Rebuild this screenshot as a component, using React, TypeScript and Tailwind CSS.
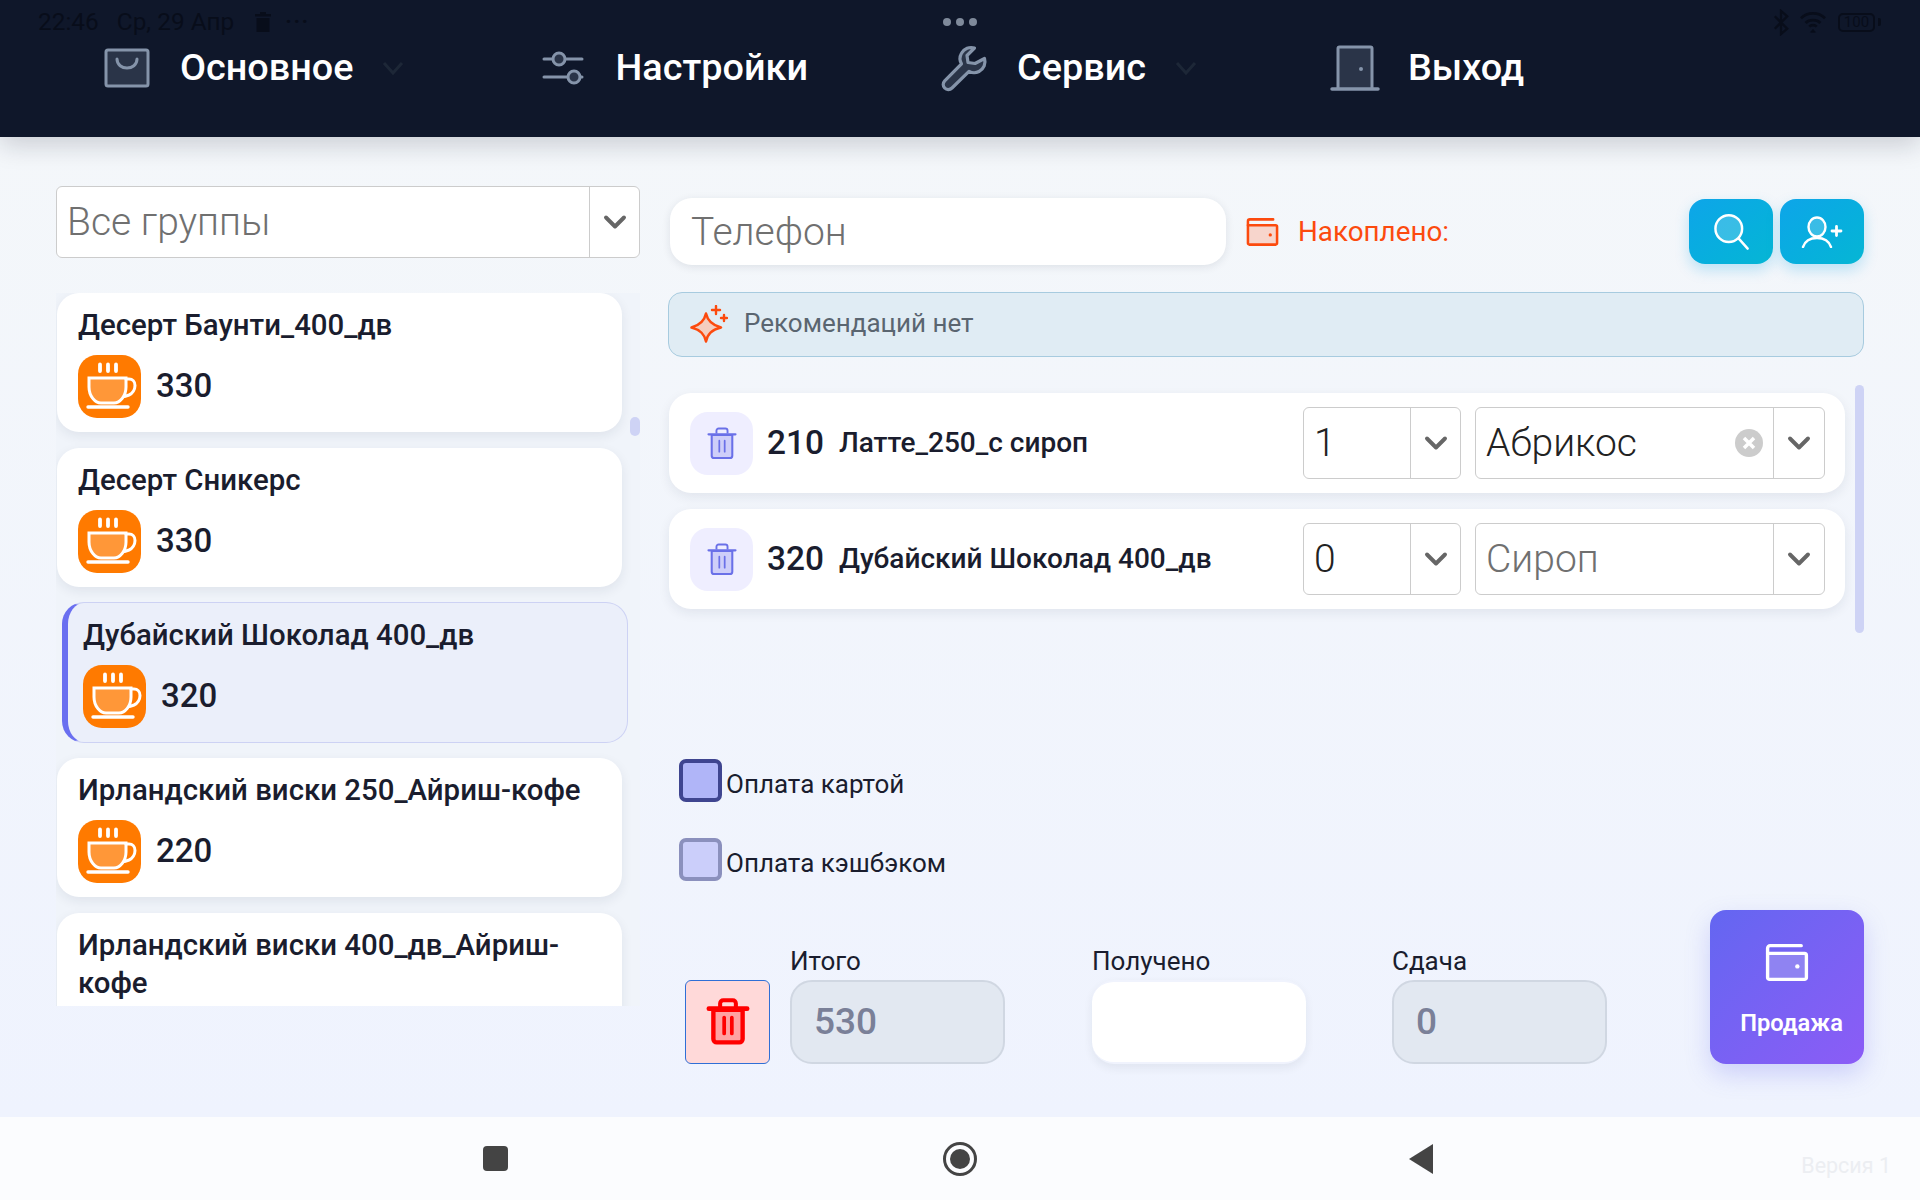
import { ChevronDown } from "lucide-react";

const PRODUCTS = [
  { name: "Десерт Баунти_400_дв", price: "330" },
  { name: "Десерт Сникерс", price: "330" },
  { name: "Дубайский Шоколад 400_дв", price: "320", active: true },
  { name: "Ирландский виски 250_Айриш-кофе", price: "220" },
  { name: "Ирландский виски 400_дв_Айриш-кофе", price: "" },
];

const CupIcon = () => (
  <div className="w-[63px] h-[63px] shrink-0 rounded-[19px] bg-[#ff7a00] flex items-center justify-center">
    <svg viewBox="0 0 63 63" className="w-[63px] h-[63px]" fill="none">
      <path d="M11 23h37v9c0 9-6 16-12 16H23c-6 0-12-7-12-16z" fill="#ffffff" fillOpacity="0.22" stroke="#fff" strokeWidth="3" />
      <path d="M48 24h3c3.500 0 6 2.500 6 6.500s-2.500 8-6 9.500l-4.500 1.500" stroke="#fff" strokeWidth="3" strokeLinecap="round" />
      <path d="M10 52h40" stroke="#fff" strokeWidth="3.400" strokeLinecap="round" />
      <path d="M22 9.500v6.500M30 9.500v6.500M38 9.500v6.500" stroke="#fff" strokeWidth="3.800" strokeLinecap="round" />
    </svg>
  </div>
);

const TrashIcon = ({ color, size, weight = 1 }: { color: string; size: number; weight?: number }) => (
  <svg viewBox="0 0 24 24" width={size} height={size} fill="none">
    <path d="M5.500 7h13v13a1.500 1.500 0 0 1-1.500 1.500H7A1.500 1.500 0 0 1 5.500 20z" fill={color} fillOpacity="0.25" stroke={color} strokeWidth={1.3 * weight} strokeLinejoin="round" />
    <path d="M3.500 6.500h17" stroke={color} strokeWidth={1.4 * weight} strokeLinecap="round" />
    <path d="M8.500 6V4.200c0-.8.6-1.400 1.400-1.400h4.200c.8 0 1.400.6 1.400 1.400V6" stroke={color} strokeWidth={1.2 * weight} />
    <path d="M10.300 10.500v7M13.700 10.500v7" stroke={color} strokeWidth={1.1 * weight} strokeLinecap="round" />
  </svg>
);

const WalletIcon = ({ color, fill }: { color: string; fill: string }) => (
  <svg viewBox="0 0 34 30" className="w-full h-full" fill="none">
    <path d="M2 8h28.500a1.500 1.500 0 0 1 1.500 1.500v17a1.500 1.500 0 0 1-1.500 1.500h-27A1.500 1.500 0 0 1 2 26.500z" fill={fill} stroke={color} strokeWidth="2.600" strokeLinejoin="round" />
    <path d="M2 8V4a2 2 0 0 1 2-2h24" stroke={color} strokeWidth="2.600" strokeLinecap="round" />
    <circle cx="25" cy="18" r="1.700" fill={color} />
  </svg>
);

const NavChevron = () => (
  <svg viewBox="0 0 22 14" className="w-[22px] h-[14px]" fill="none">
    <path d="M2 2l9 10 9-10" stroke="#1d2737" strokeWidth="3" />
  </svg>
);

const Select = ({ value, placeholder, clear, w, dividerRight }: { value: string; placeholder?: boolean; clear?: boolean; w: string; dividerRight: string }) => (
  <div className={`${w} h-[72px] shrink-0 bg-white border border-[#cccccc] rounded-[6px] flex items-center`}>
    <span className={`flex-1 pl-[10px] text-[39px] font-light leading-none ${placeholder ? "text-[#707070]" : "text-[#222222]"}`}>{value}</span>
    {clear && (
      <svg viewBox="0 0 28 28" className="w-[28px] h-[28px] mr-[10px]" fill="none">
        <circle cx="14" cy="14" r="14" fill="#cccccc" />
        <path d="M9 9l10 10M19 9L9 19" stroke="#fff" strokeWidth="3.500" />
      </svg>
    )}
    <div className={`${dividerRight} h-full border-l border-[#cccccc] flex items-center justify-center`}>
      <ChevronDown size={36} strokeWidth={2.6} color="#666666" />
    </div>
  </div>
);

const ProductCard = ({ name, price, active }: { name: string; price: string; active?: boolean }) => (
  <div
    className={
      active
        ? "h-[141px] my-[-1px] ml-[5px] w-[566px] shrink-0 rounded-[22px] bg-[#ebeffa] border border-[#cdd2f4] border-l-[6px] border-l-[#6a6ff0] pl-[15px] pr-[15px] pt-[13px]"
        : "h-[139px] w-[565px] shrink-0 rounded-[22px] bg-white shadow-[0_4px_12px_rgba(30,41,59,0.08)] pl-[21px] pr-[21px] pt-[13px]"
    }
  >
    <div className="text-[29.4px] leading-[38px] font-medium text-[#1a1d2e]">{name}</div>
    {price && (
      <div className="flex items-center gap-[15px] mt-[11px]">
        <CupIcon />
        <span className="pb-[2px] text-[33px] font-medium text-[#1a1d2e]">{price}</span>
      </div>
    )}
  </div>
);

const OrderRow = ({ price, name, qty, syrup, selected }: { price: string; name: string; qty: string; syrup: string; selected?: boolean }) => (
  <div className="ml-[1px] w-[1176px] h-[100px] bg-white rounded-[22px] shadow-[0_4px_12px_rgba(30,41,59,0.08)] flex items-center pl-[21px] pr-[20px]">
    <div className="w-[63px] h-[63px] rounded-[18px] bg-[#efeeff] flex items-center justify-center">
      <TrashIcon color="#6a70e8" size={38} />
    </div>
    <span className="ml-[14px] text-[33.4px] font-medium text-[#1a1d2e]">{price}</span>
    <span className="ml-[15px] flex-1 text-[28px] font-medium text-[#1a1d2e]">{name}</span>
    <Select value={qty} w="w-[158px]" dividerRight="w-[50px]" />
    <div className="w-[14px]" />
    <Select value={syrup} placeholder={!selected} clear={selected} w="w-[350px]" dividerRight="w-[51px]" />
  </div>
);

const Field = ({ label, value, white, w }: { label: string; value?: string; white?: boolean; w: string }) => (
  <div className={`${w} flex flex-col`}>
    <span className="text-[26px] leading-[30px] text-[#1a1d2e] mb-[4px]">{label}</span>
    <div
      className={
        white
          ? "h-[84px] border-y-2 border-[#f0f3fd] rounded-[22px] bg-white shadow-[0_4px_10px_rgba(30,41,59,0.07)]"
          : "h-[84px] rounded-[22px] bg-[#e2e8f1] border-2 border-[#d0d7e2] pl-[22px] flex items-center text-[37px] font-medium text-[#7a8098]"
      }
    >
      {value}
    </div>
  </div>
);

export default function App() {
  return (
    <div className="w-[1920px] h-[1200px] flex flex-col overflow-hidden font-['Roboto',sans-serif] bg-[#f1f5fc]">
      {/* Header */}
      <header className="relative z-10 h-[137px] shrink-0 bg-[#0f172a] shadow-[0_8px_24px_rgba(15,23,42,0.18)]">
        <div className="h-[44px] pl-[38px] pr-[39px] flex items-center justify-between text-[#080d1a]">
          <div className="flex items-center text-[24.4px] leading-none">
            <span>22:46</span>
            <span className="ml-[18px]">Ср, 29 Апр</span>
            <svg viewBox="0 0 24 24" className="w-[24px] h-[24px] ml-[17px]" fill="#080d1a">
              <path d="M9 2h6v2h5v2.500H4V4h5zM5.500 8h13v14h-13z" />
            </svg>
            <span className="ml-[10px] text-[22px] tracking-[1.5px] font-bold">···</span>
          </div>
          <div className="flex items-center">
            <svg viewBox="0 0 18 30" className="w-[16px] h-[27px]" fill="none" stroke="#080d1a" strokeWidth="2.600">
              <path d="M2 8l14 14-7 6V2l7 6L2 22" />
            </svg>
            <svg viewBox="0 0 30 26" className="w-[28px] h-[24px] ml-[10px]" fill="none" stroke="#080d1a" strokeWidth="3">
              <path d="M2 9c7-7 19-7 26 0M7 14c4-4 12-4 16 0M11 18c2-2 6-2 8 0" />
              <path d="M15 21l-2.500 3h5z" fill="#080d1a" strokeWidth="1" />
            </svg>
            <div className="w-[37px] h-[19px] ml-[11px] border-[2px] border-[#080d1a] rounded-[5px] flex items-center justify-center text-[15px] leading-none text-[#080d1a]">
              100
            </div>
            <div className="w-[3px] h-[8px] ml-[3px] rounded-r-[2px] bg-[#080d1a]" />
          </div>
        </div>

        <div className="absolute left-[943px] top-[18px] flex gap-[5px]">
          <div className="w-[8px] h-[8px] rounded-full bg-[#7f8a9b]" />
          <div className="w-[8px] h-[8px] rounded-full bg-[#7f8a9b]" />
          <div className="w-[8px] h-[8px] rounded-full bg-[#7f8a9b]" />
        </div>

        <nav className="flex items-center h-[48px] pl-[104px] text-[37.8px] font-medium text-white leading-none">
          <svg viewBox="0 0 46 40" className="w-[46px] h-[40px]" fill="none">
            <rect x="2" y="2" width="42" height="36" rx="2" fill="#2a3448" stroke="#8594aa" strokeWidth="3" />
            <path d="M13 11c0 12 20 12 20 0" stroke="#8594aa" strokeWidth="3" strokeLinecap="round" />
          </svg>
          <span className="ml-[30px]">Основное</span>
          <div className="ml-[28px]"><NavChevron /></div>

          <svg viewBox="0 0 42 36" className="w-[42px] h-[36px] ml-[138px]" fill="none" stroke="#8594aa" strokeWidth="3" strokeLinecap="round">
            <path d="M2 9h8M24 9h16M2 27h24M38 27h2" />
            <circle cx="17" cy="9" r="6" fill="#2a3448" />
            <circle cx="32" cy="27" r="6" fill="#2a3448" />
          </svg>
          <span className="ml-[32px]">Настройки</span>

          <svg viewBox="0 0 48 48" className="w-[48px] h-[48px] ml-[133px]" fill="none">
            <path
              d="M43.500 14.500c1.500 5-0.500 10.500-5.500 13-3.500 1.800-7 1.500-10-0.200L11 44c-2.200 2.200-5.500 2-7.300 0-2-1.800-2-5 0-7.200l16.800-17c-1.800-3-2-7 0-10.500C23 4.500 28.500 2.500 33.500 4L26 11.500l1 7 7 1z"
              fill="#2a3448"
              stroke="#8594aa"
              strokeWidth="3.200"
              strokeLinejoin="round"
            />
          </svg>
          <span className="ml-[28px]">Сервис</span>
          <div className="ml-[29px]"><NavChevron /></div>

          <svg viewBox="0 0 50 46" className="w-[50px] h-[46px] ml-[133px]" fill="none">
            <path d="M8 44V3.500a1.500 1.500 0 0 1 1.500-1.500h31a1.500 1.500 0 0 1 1.500 1.500V44" fill="#2a3448" stroke="#8594aa" strokeWidth="3" />
            <path d="M2 44h46" stroke="#8594aa" strokeWidth="3.500" strokeLinecap="round" />
            <circle cx="31" cy="24" r="2" fill="#8594aa" />
          </svg>
          <span className="ml-[28px]">Выход</span>
        </nav>
      </header>

      {/* Content */}
      <main className="flex-1 flex pl-[56px] pt-[49px] gap-[28px] bg-gradient-to-b from-[#f4f7fa] to-[#eff3fe]">
        <div className="w-[584px] shrink-0 flex flex-col">
          <div className="h-[72px] bg-white border border-[#cccccc] rounded-[6px] flex items-center">
            <span className="flex-1 pl-[10px] text-[39px] font-light text-[#707070] leading-none">Все группы</span>
            <div className="w-[50px] h-full border-l border-[#cccccc] flex items-center justify-center">
              <ChevronDown size={36} strokeWidth={2.6} color="#666666" />
            </div>
          </div>

          <div className="relative mt-[35px] h-[713px] overflow-hidden flex flex-col gap-[16px] pl-[1px] bg-[#f0f4fa]">
            {PRODUCTS.map((p) => (
              <ProductCard key={p.name} {...p} />
            ))}
            <div className="absolute left-[574px] top-[124px] w-[10px] h-[19px] rounded-[5px] bg-[#ced3f5]" />
          </div>
        </div>

        <div className="w-[1196px] shrink-0 flex flex-col">
          <div className="mt-[12px] h-[67px] flex items-center">
            <div className="ml-[2px] w-[556px] h-[67px] bg-white rounded-[22px] shadow-[0_2px_8px_rgba(30,41,59,0.10)] flex items-center pl-[21px] pt-[2px] text-[39px] font-light text-[#707070]">
              Телефон
            </div>
            <div className="w-[33px] h-[30px] ml-[20px]">
              <WalletIcon color="#fc4a0e" fill="#f7d5cc" />
            </div>
            <span className="ml-[19px] text-[27.8px] text-[#fc4a0e]">Накоплено:</span>
            <div className="flex-1" />
            <button className="w-[84px] h-[65px] rounded-[16px] bg-gradient-to-br from-[#0ea5e9] to-[#06b6d4] shadow-[0_6px_14px_rgba(14,165,233,0.25)] flex items-center justify-center">
              <svg viewBox="0 0 36 36" className="w-[40px] h-[40px]" fill="none">
                <circle cx="16" cy="15" r="12" fill="#fff" fillOpacity="0.2" stroke="#fff" strokeWidth="2.200" />
                <path d="M25 24l8 9" stroke="#fff" strokeWidth="2.200" strokeLinecap="round" />
              </svg>
            </button>
            <button className="w-[84px] h-[65px] ml-[7px] rounded-[16px] bg-gradient-to-br from-[#0ea5e9] to-[#06b6d4] shadow-[0_6px_14px_rgba(14,165,233,0.25)] flex items-center justify-center">
              <svg viewBox="0 0 42 32" className="w-[42px] h-[32px]" fill="none" stroke="#fff" strokeWidth="2.400" strokeLinecap="round">
                <ellipse cx="16" cy="11" rx="8.500" ry="9.500" fill="#fff" fillOpacity="0.2" />
                <path d="M2 31c2-6 7-9 14-9s12 3 14 9" />
                <path d="M31 15h9M35.500 10.500v9" strokeWidth="2.800" />
              </svg>
            </button>
          </div>

          <div className="mt-[27px] h-[65px] rounded-[14px] bg-[#e0ecf4] border border-[#a7cbdf] flex items-center pl-[21px] pb-[2px]">
            <svg viewBox="0 0 38 38" className="w-[38px] h-[38px]" fill="none">
              <path d="M16 8.500c1.500 7 5.500 11.500 15 14-9.500 2.500-13.500 6.500-15 14-1.500-7.500-5.500-11.500-14.500-14C10.500 20 14.500 15.500 16 8.500z" fill="#f4cdbf" stroke="#fc4a0e" strokeWidth="2.500" strokeLinejoin="round" />
              <path d="M26 1v8M22 5h8M34 10v6M31 13h6" stroke="#fc4a0e" strokeWidth="2.400" strokeLinecap="round" />
            </svg>
            <span className="ml-[16px] text-[26px] text-[#5a6570]">Рекомендаций нет</span>
          </div>

          <div className="relative mt-[28px] h-[248px] pt-[8px] flex flex-col gap-[16px]">
            <OrderRow price="210" name="Латте_250_с сироп" qty="1" syrup="Абрикос" selected />
            <OrderRow price="320" name="Дубайский Шоколад 400_дв" qty="0" syrup="Сироп" />
            <div className="absolute right-0 top-0 w-[9px] h-[248px] rounded-[5px] bg-[#ced3f5]" />
          </div>

          <div className="mt-[126px] flex flex-col gap-[36px] pl-[11px]">
            <div className="h-[43px] flex items-center gap-[4px]">
              <div className="w-[43px] h-[43px] rounded-[7px] bg-[#b0b5f8] border-[4px] border-[#3f4590]" />
              <span className="mt-[7px] text-[26px] leading-[30px] text-[#1a1d2e]">Оплата картой</span>
            </div>
            <div className="h-[43px] flex items-center gap-[4px]">
              <div className="w-[43px] h-[43px] rounded-[7px] bg-[#cbcefa] border-[4px] border-[#8b90bd]" />
              <span className="mt-[7px] text-[26px] leading-[30px] text-[#1a1d2e]">Оплата кэшбэком</span>
            </div>
          </div>

          <div className="mt-[29px] flex items-end pl-[17px]">
            <button className="w-[85px] h-[84px] rounded-[6px] bg-[#ffd9d9] border border-[#2f6fd6] flex items-center justify-center pb-[3px]">
              <TrashIcon color="#ff0000" size={54} weight={1.5} />
            </button>
            <div className="ml-[20px]"><Field label="Итого" value="530" w="w-[215px]" /></div>
            <div className="ml-[87px]"><Field label="Получено" white w="w-[214px]" /></div>
            <div className="ml-[86px]"><Field label="Сдача" value="0" w="w-[215px]" /></div>
            <button className="ml-[103px] w-[154px] h-[154px] rounded-[16px] bg-gradient-to-br from-[#6366f1] to-[#8b5cf6] shadow-[0_10px_24px_rgba(99,102,241,0.25)] flex flex-col items-center pt-[33px]">
              <div className="w-[44px] h-[39px]">
                <WalletIcon color="#ffffff" fill="#8f83f2" />
              </div>
              <span className="mt-[26px] pl-[9px] text-[23.7px] leading-[30px] font-semibold text-white">Продажа</span>
            </button>
          </div>
        </div>
      </main>

      {/* Android nav */}
      <footer className="relative h-[83px] shrink-0 bg-[#fbfcfe] flex items-center">
        <div className="ml-[483px] w-[25px] h-[25px] rounded-[4px] bg-[#444444]" />
        <div className="ml-[435px] w-[34px] h-[34px] rounded-full border-[3px] border-[#444444] flex items-center justify-center">
          <div className="w-[20px] h-[20px] rounded-full bg-[#444444]" />
        </div>
        <svg viewBox="0 0 25 32" className="ml-[431px] w-[25px] h-[32px]">
          <path d="M1 16L25 1v30z" fill="#444444" />
        </svg>
        <span className="absolute right-[29px] top-[33px] text-[21.5px] text-[#eceef2]">Версия 1</span>
      </footer>
    </div>
  );
}
